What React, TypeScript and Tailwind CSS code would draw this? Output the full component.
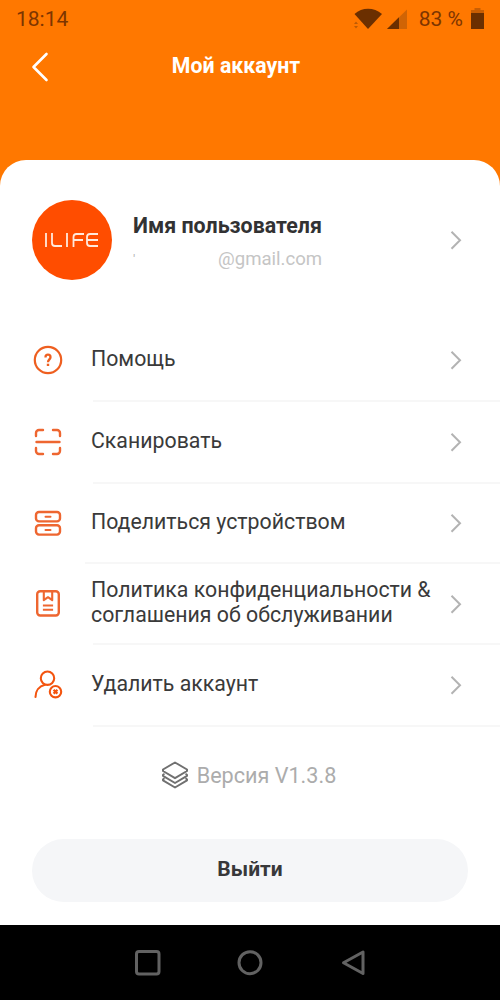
import type { ReactNode } from 'react';

interface MenuItem {
  label: string;
  icon: ReactNode;
  rowClass: string;
  lineClass: string;
}

const HelpIcon = () => (
  <svg width="30" height="30" viewBox="0 0 30 30" fill="none" stroke="#ee5f20" strokeWidth="2.2">
    <circle cx="15" cy="15" r="13.2" />
    <path d="M12.5 12.600v-.4a2.500 2.500 0 0 1 5 0c0 2-2.500 2.400-2.500 5" strokeWidth="2.300" />
    <path d="M15 18.700v2.300" strokeWidth="2.400" />
  </svg>
);

const ScanIcon = () => (
  <svg width="30" height="30" viewBox="0 0 30 30" fill="none" stroke="#ee6630" strokeWidth="2.4" strokeLinecap="round">
    <path d="M3 9V6a3 3 0 0 1 3-3h4M20 3h4a3 3 0 0 1 3 3v3M27 21v3a3 3 0 0 1-3 3h-4M10 27H6a3 3 0 0 1-3-3v-3M3.500 15h23" />
  </svg>
);

const ShareIcon = () => (
  <svg width="30" height="30" viewBox="0 0 30 30" fill="none" stroke="#ee6630" strokeWidth="2.4" strokeLinecap="round">
    <rect x="3" y="4" width="24" height="9.400" rx="3" />
    <rect x="3" y="17.200" width="24" height="9.400" rx="3" />
    <path d="M12.500 8.700h5M12.500 21.900h5" strokeWidth="2" />
  </svg>
);

const PolicyIcon = () => (
  <svg width="30" height="30" viewBox="0 0 30 30" fill="none" stroke="#ee6630" strokeWidth="2.4" strokeLinejoin="round">
    <rect x="4.200" y="2.300" width="21.600" height="24.200" rx="3" />
    <path d="M10.800 2.600v8.600l4.200-3 4.200 3V2.600" strokeWidth="2.100" />
    <path d="M9.900 16.500h10.200M9.900 20.800h10.200" strokeWidth="2.100" />
  </svg>
);

const DeleteIcon = () => (
  <svg width="30" height="30" viewBox="0 0 30 30" fill="none" stroke="#f3540f" strokeWidth="2.1">
    <circle cx="14.500" cy="8.200" r="6.700" />
    <path d="M2.500 27c0-6 3.500-10.800 9.500-12.300" strokeLinecap="round" />
    <circle cx="22.500" cy="21.700" r="5.700" />
    <path d="m20.600 19.800 3.800 3.800m0-3.800-3.800 3.800" strokeWidth="2.200" />
  </svg>
);

const Chevron = () => (
  <svg className="shrink-0" width="12" height="20" viewBox="0 0 12 20" fill="none" stroke="#b3b3b3" strokeWidth="2">
    <path d="m1.500 1.800 8.500 8.500-8.500 8.500" />
  </svg>
);

const items: MenuItem[] = [
  { label: 'Помощь', icon: <HelpIcon />, rowClass: 'h-[82px]', lineClass: 'left-[93px]' },
  { label: 'Сканировать', icon: <ScanIcon />, rowClass: 'h-[82px]', lineClass: 'left-[93px]' },
  { label: 'Поделиться устройством', icon: <ShareIcon />, rowClass: 'h-[80px]', lineClass: 'left-[85px]' },
  { label: 'Политика конфиденциальности & соглашения об обслуживании', icon: <PolicyIcon />, rowClass: 'h-[81px]', lineClass: 'left-[93px]' },
  { label: 'Удалить аккаунт', icon: <DeleteIcon />, rowClass: 'h-[82px]', lineClass: 'left-[93px]' },
];

function StatusBar() {
  return (
    <div className="flex h-[38px] items-center justify-between px-4 pt-px text-[21px] text-[#7d3500]">
      <span>18:14</span>
      <div className="flex items-center">
        <svg width="54" height="24" viewBox="0 0 54 24">
          <path d="M.5 6C8-1 20-1 28 6L14 21z" fill="#6b2f00" />
          <path d="M0 16l2-2.500 2 2.500zM0 18h4l-2 2.500z" fill="#bd5b05" />
          <path d="M53 1.500v19.500H33z" fill="#d06405" />
          <path d="M45 9.300V21H33z" fill="#6b2f00" />
        </svg>
        <span className="ml-[11px]">83 %</span>
        <svg className="mb-px ml-2" width="13" height="22" viewBox="0 0 13 22">
          <path d="M3.500 0h6v2H13v4H0V2h3.500z" fill="#c95e03" />
          <path d="M0 5h13v16H0z" fill="#6b2f00" />
        </svg>
      </div>
    </div>
  );
}

function Header() {
  return (
    <header className="relative flex h-[122px] items-start justify-center pt-[14px]">
      <svg className="absolute left-[31px] top-[14px]" width="18" height="30" viewBox="0 0 18 30" fill="none" stroke="#fff" strokeWidth="2.600" strokeLinecap="round" strokeLinejoin="round">
        <path d="M15.500 2 2.500 15l13 13" />
      </svg>
      <h1 className="pr-7 text-[21.300px] leading-7 font-bold text-white">Мой аккаунт</h1>
    </header>
  );
}

function Profile() {
  return (
    <div className="flex h-[160px] items-center pl-8 pr-[38px]">
      <div className="flex h-20 w-20 items-center justify-center rounded-full bg-[#ff4d00]">
        <svg width="54" height="14" viewBox="0 0 54 14" fill="none" stroke="#ffe9dc" strokeWidth="1.800" aria-label="ILIFE">
          <path d="M1 0v14M7 0v10q0 3 3 3h7M22 0v14M28.500 14V4q0-3 3-3H39M28.500 7H38M53 1h-8q-3 0-3 3v6q0 3 3 3h8M42 7h11" />
        </svg>
      </div>
      <div className="ml-[21px] flex-1 pt-[2px]">
        <p className="text-[21.400px] leading-7 font-bold whitespace-nowrap text-[#323233]">Имя пользователя</p>
        <p className="mt-[7px] flex items-start text-[18.600px] leading-6 text-[#c5c5c5]">
          <span className="w-[85px] pt-[3px] text-[13px] leading-5 text-[#b5b5b5]">'</span>
          <span>@gmail.com</span>
        </p>
      </div>
      <Chevron />
    </div>
  );
}

function MenuRow({ item }: { item: MenuItem }) {
  return (
    <li className={`relative flex items-center pl-[33px] pr-[38px] ${item.rowClass}`}>
      <span className="shrink-0">{item.icon}</span>
      <span className="ml-7 w-[359px] pb-[3px] text-[21.300px] leading-[25px] text-[#3a3a3a]">{item.label}</span>
      <Chevron />
      <div className={`absolute right-0 -bottom-px h-[2px] bg-[#f7f7f7] ${item.lineClass}`} />
    </li>
  );
}

export default function App() {
  return (
    <div className="flex h-[1000px] w-[500px] flex-col overflow-hidden bg-[#ff7800] font-['Roboto',sans-serif]">
      <StatusBar />
      <Header />
      <main className="h-[765px] rounded-t-[26px] bg-white">
        <Profile />
        <ul className="-mt-px">
          {items.map((item) => (
            <MenuRow key={item.label} item={item} />
          ))}
        </ul>
        <div className="flex h-[98px] items-center justify-center pr-[3px] text-[21.600px] text-[#acacac]">
          <svg className="mr-2" width="28" height="28" viewBox="0 0 28 28" fill="none" stroke="#707070" strokeWidth="2" strokeLinejoin="round" strokeLinecap="round">
            <path d="M14 1.500 26 8.500v1.500L14 17.200 2 10V8.500z" />
            <path d="M2.800 13.200 2 14v.8l12 7.200 12-7.200V14l-.8-.8M2.800 17.700l-.8.800v.8l12 7.200 12-7.200v-.8l-.8-.8" />
          </svg>
          <span className="pt-[2px]">Версия V1.3.8</span>
        </div>
        <div className="px-8 pt-[15px]">
          <button className="h-[63px] w-full rounded-full bg-[#f5f6f8] pb-[2px] text-[21px] font-bold text-[#38383a]">Выйти</button>
        </div>
      </main>
      <nav className="h-[75px] bg-black">
        <svg className="block" width="500" height="75" viewBox="0 0 500 75" fill="none" stroke="#626262" strokeWidth="3" strokeLinejoin="round">
          <rect x="136.500" y="26.500" width="22.500" height="22.500" rx="2.500" />
          <circle cx="250" cy="37.700" r="11" />
          <path d="M363 27v21.500L343.500 37.700z" />
        </svg>
      </nav>
    </div>
  );
}
